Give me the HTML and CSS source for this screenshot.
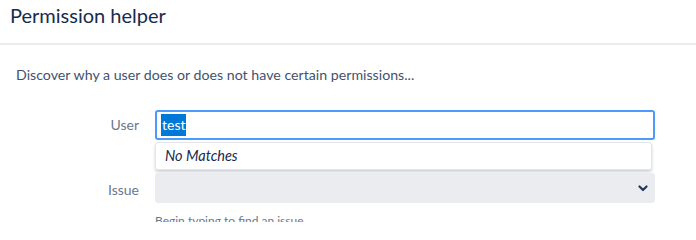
FILE: index.html
```html
<!DOCTYPE html>
<html>
<head>
<meta charset="utf-8">
<link rel="stylesheet" href="styles.css">
</head>
<body>
<header class="page-header">
  <h1 class="title">Permission helper</h1>
</header>
<main class="content">
  <p class="intro">Discover why a user does or does not have certain permissions...</p>
  <form class="form">
    <div class="field">
      <label class="label">User</label>
      <div class="control">
        <div class="input focused"><span class="sel">test</span></div>
        <div class="dropdown"><em>No Matches</em></div>
      </div>
    </div>
    <div class="field">
      <label class="label label-issue">Issue</label>
      <div class="control">
        <div class="select">
          <svg class="chev" width="10" height="7" viewBox="0 0 10 7"><path d="M1.5 1.5 L5 5 L8.5 1.5" fill="none" stroke="#253858" stroke-width="2.2" stroke-linecap="round" stroke-linejoin="round"/></svg>
        </div>
        <div class="help">Begin typing to find an issue</div>
      </div>
    </div>
  </form>
</main>
</body>
</html>
```
FILE: styles.css
```css
* { box-sizing: border-box; }
html, body { margin: 0; padding: 0; background: #fff; }
body {
  font-family: "Lato", "Noto Sans", sans-serif;
  color: #172b4d;
  overflow: hidden;
  height: 222px;
}
.page-header {
  height: 45px;
  border-bottom: 2px solid #ebecf0;
  padding: 1px 10px 0;
}
.title {
  margin: 0;
  font-size: 20px;
  font-weight: 400;
  line-height: 28px;
  color: #172b4d;
}
.content { padding: 20px 16px 0; }
.intro {
  margin: 0;
  font-size: 14.2px;
  line-height: 20px;
  color: #42526e;
}
.form { margin-top: 25px; display: flex; flex-direction: column; gap: 3px; }
.field { display: flex; gap: 16px; }
.label {
  width: 123px;
  text-align: right;
  font-size: 14px;
  color: #6b778c;
  line-height: 20px;
  padding-top: 5px;
}
.label-issue { padding-top: 7px; }
.control { width: 500px; display: flex; flex-direction: column; gap: 2px; }
.input {
  height: 30px;
  border: 2px solid #4c9aff;
  border-radius: 3px;
  padding: 1px 4px;
  font-size: 14px;
  line-height: 24px;
  display: flex;
  align-items: center;
}
.sel { background: #0078d7; color: #fff; line-height: 22px; padding: 0 1px; }
.dropdown {
  width: 497px;
  height: 28px;
  border: 1px solid #e3e5ea;
  border-radius: 3px;
  box-shadow: 0 2px 3px rgba(9,30,66,0.2);
  padding: 0 9px;
  font-size: 14.5px;
  line-height: 26px;
  color: #172b4d;
}
.select {
  height: 30px;
  background: #ebecf0;
  border-radius: 3px;
  display: flex;
  align-items: center;
  justify-content: flex-end;
  padding-right: 7px;
}
.help {
  margin-top: 8px;
  font-size: 12px;
  color: #6b778c;
}
```
